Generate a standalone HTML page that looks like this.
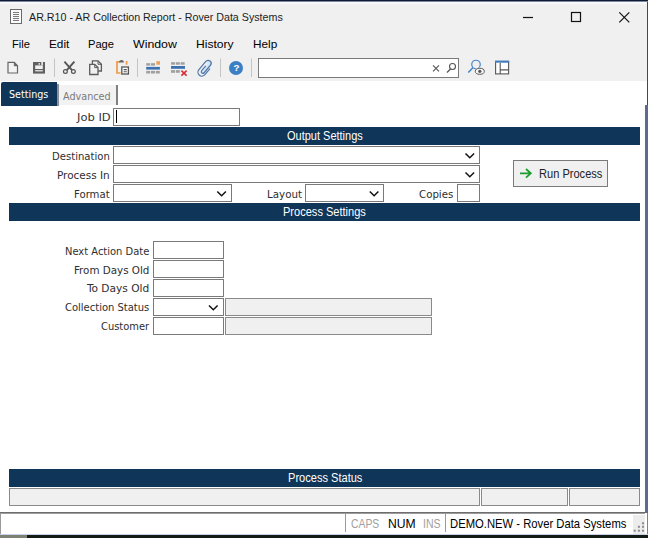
<!DOCTYPE html>
<html><head><meta charset="utf-8"><title>AR.R10 - AR Collection Report - Rover Data Systems</title>
<style>
html,body{margin:0;padding:0}
body{width:648px;height:538px;position:relative;overflow:hidden;background:#fff;font-family:"Liberation Sans",sans-serif}
.a{position:absolute}
.t{position:absolute;white-space:nowrap;transform-origin:0 0;display:inline-block}
.in{position:absolute;box-sizing:border-box;border:1px solid #7a7a7a;background:#fff}
.ro{position:absolute;box-sizing:border-box;border:1px solid #8a8a8a;background:#f0f0f0}
.bar{position:absolute;left:9px;width:631px;background:#0f3558}
.sep{position:absolute;width:1px;background:#c8c8c8}
svg{position:absolute;overflow:visible}

</style></head>
<body>
<!-- window chrome -->
<div class="a" style="left:0;top:0;width:648px;height:81px;background:#f0f0f0"></div>
<div class="a" style="left:0;top:0;width:648px;height:1px;background:#0f1b35"></div>
<div class="a" style="left:0;top:1px;width:648px;height:1px;background:#7d889e"></div>
<div class="a" style="left:0;top:2px;width:647px;height:2px;background:#f6f8fb"></div>
<div class="a" style="left:647px;top:2px;width:1px;height:103px;background:#33497a"></div>
<div class="a" style="left:645px;top:105px;width:3px;height:408px;background:#5f6b8c"></div>
<!-- bottom desktop strip -->
<div class="a" style="left:0;top:534px;width:648px;height:1px;background:#c9d2e6"></div>
<div class="a" style="left:0;top:535px;width:648px;height:3px;background:#121c15"></div>
<div class="a" style="left:0;top:535px;width:27px;height:3px;background:#7d8274"></div>

<!-- title icon -->
<svg style="left:10px;top:9px" width="13" height="16" viewBox="0 0 13 16">
<rect x="0.500" y="0.500" width="11" height="14" fill="#fafafa" stroke="#6a6a6a" />
<path d="M3 3.500h6M3 5.500h6M3 7.500h6M3 9.500h6M3 11.500h6" stroke="#7a7a7a" stroke-width="1"/>
</svg>
<!-- window buttons -->
<svg style="left:0;top:0" width="648" height="32" viewBox="0 0 648 32">
<path d="M523 17.5h10" stroke="#111" stroke-width="1.2"/>
<rect x="571.5" y="12.5" width="9" height="9" fill="none" stroke="#111" stroke-width="1.2"/>
<path d="M619.3 12.3l10 10M629.3 12.3l-10 10" stroke="#111" stroke-width="1.2"/>
</svg>

<!-- toolbar -->
<svg style="left:0;top:54px" width="648" height="28" viewBox="0 54 648 28">
<!-- new -->
<path d="M8 62.300h6.300l3.200 3.400v7.300h-9.500z" fill="#f2f2f2" stroke="#666" stroke-width="1.200"/>
<path d="M14.200 62.300v3.600h3.400z" fill="#666" stroke="#666" stroke-width="0.600"/>
<!-- save -->
<rect x="33" y="62" width="12" height="11.600" fill="#606060"/>
<rect x="35.200" y="65.400" width="7.600" height="3.600" fill="#f0f0f0"/>
<rect x="41.300" y="62" width="1.600" height="3.400" fill="#f0f0f0"/>
<rect x="38.500" y="63" width="1.500" height="1.800" fill="#d4d4d4"/>
<rect x="35.200" y="70.100" width="7.600" height="1.300" fill="#e6e6e6"/>
<!-- sep -->
<path d="M54.500 58.500v18.500M137.500 58.500v18.500M220.500 58.500v18.500M251.500 58.500v18.500" stroke="#c4c4c4" stroke-width="1"/>
<!-- scissors -->
<path d="M64.400 61.600l7.600 8.600M74.400 61.600l-7.600 8.600" stroke="#555" stroke-width="1.900" fill="none"/>
<circle cx="65.400" cy="71.500" r="1.900" fill="none" stroke="#555" stroke-width="1.200"/>
<circle cx="73.400" cy="71.500" r="1.900" fill="none" stroke="#555" stroke-width="1.200"/>
<!-- copy -->
<path d="M92.400 60.900h5.600l3.400 3.400v6.700h-9z" fill="#f0f0f0" stroke="#5c5c5c" stroke-width="1.300"/>
<path d="M98 60.900v3.400h3.400" fill="none" stroke="#5c5c5c" stroke-width="1"/>
<path d="M89.700 64.300h5l3.300 3.300v6.900h-8.300z" fill="#f0f0f0" stroke="#5c5c5c" stroke-width="1.300"/>
<path d="M94.700 64.300v3.300h3.300" fill="none" stroke="#5c5c5c" stroke-width="1"/>
<!-- paste -->
<path d="M120 61.800H117V73H120.600" fill="none" stroke="#ee9a45" stroke-width="1.700"/>
<path d="M126.600 61V64.700" fill="none" stroke="#ee9a45" stroke-width="1.700"/>
<path d="M119.200 62.600v-0.800a2.300 1.700 0 0 1 4.600 0v0.800z" fill="#666"/>
<rect x="121.800" y="67" width="6.600" height="7" fill="#fff" stroke="#555" stroke-width="1.300"/>
<path d="M123.600 69.600h3.200M123.600 71.800h3.200" stroke="#555" stroke-width="1.100"/>
<!-- insert row -->
<g fill="#a0a0a0">
<rect x="146.200" y="63.200" width="4" height="2.400"/><rect x="151" y="63.200" width="4" height="2.400"/>
<rect x="146.200" y="70.900" width="4" height="2.600"/><rect x="151" y="70.900" width="4" height="2.600"/><rect x="155.800" y="70.900" width="4" height="2.600"/>
</g>
<rect x="156.400" y="61.200" width="3.600" height="3.500" fill="#f0a050"/>
<rect x="146.200" y="66.900" width="13.700" height="2.700" fill="#3c72b0"/>
<!-- delete row -->
<g fill="#a0a0a0">
<rect x="171" y="62.200" width="4" height="2.500"/><rect x="175.800" y="62.200" width="4" height="2.500"/><rect x="180.600" y="62.200" width="4" height="2.500"/>
<rect x="171" y="70.100" width="4" height="2.700"/><rect x="175.800" y="70.100" width="4" height="2.700"/>
</g>
<rect x="171" y="66" width="14" height="2.800" fill="#3c72b0"/>
<path d="M181.400 70.600l5.200 5M186.600 70.600l-5.200 5" stroke="#d8303a" stroke-width="1.600"/>
<!-- paperclip -->
<g transform="translate(205 68) rotate(-50)">
<path d="M5.600 -3.600A3 3 0 0 1 5.600 2.400L-4.200 2.400A1.600 1.600 0 0 1 -4.200 -0.800L5.600 -0.800z" fill="#d4e8fb" stroke="none"/>
<path d="M2.800 4.200L-5.200 4.200A3.900 3.900 0 0 1 -5.200 -3.600L5.600 -3.600A3 3 0 0 1 5.600 2.400L-4.200 2.400A1.600 1.600 0 0 1 -4.200 -0.800L2.200 -0.800" fill="none" stroke="#5279aa" stroke-width="1.250"/>
</g>
<!-- help -->
<circle cx="236" cy="68" r="7" fill="#3b7fc4"/>
<!-- search box -->
<rect x="258.500" y="58.500" width="200" height="19" fill="#fff" stroke="#7a7a7a"/>
<path d="M433 65.300l6 6M439 65.300l-6 6" stroke="#555" stroke-width="1.100"/>
<circle cx="452.500" cy="66.500" r="3" fill="none" stroke="#555" stroke-width="1.100"/>
<path d="M450.500 69l-3.500 3.500" stroke="#555" stroke-width="1.300"/>
<!-- person search -->
<circle cx="476" cy="64.500" r="4.250" fill="none" stroke="#4384cb" stroke-width="1.200"/>
<path d="M472.800 67.800l-4.500 4.700" stroke="#4384cb" stroke-width="1.500"/>
<ellipse cx="479.800" cy="71.300" rx="5.400" ry="3.900" fill="#f0f0f0"/>
<ellipse cx="479.800" cy="71.300" rx="4.500" ry="3" fill="#f6f6f6" stroke="#5a5a5a" stroke-width="1"/>
<circle cx="479.800" cy="71.300" r="1.600" fill="#555"/>
<!-- layout -->
<rect x="495.600" y="61.500" width="13" height="12.400" fill="#fff" stroke="#555" stroke-width="1.100"/>
<rect x="495" y="60.600" width="14.200" height="2.100" fill="#3f7cc0"/>
<path d="M500.200 63v11M500.200 69.900h8.400" stroke="#555" stroke-width="1.100"/>
</svg>
<span class="t" style="left:233.400px;top:63px;font:bold 9.800px/1 'Liberation Sans',sans-serif;color:#fff">?</span>

<!-- tabs -->
<div class="a" style="left:1px;top:82px;width:56px;height:23.600px;background:#0f3558;border-radius:2px 0 0 0"></div>
<div class="a" style="left:57px;top:83.500px;width:1.600px;height:22.100px;background:#8a9099"></div>
<div class="a" style="left:58.600px;top:85.200px;width:57.600px;height:19.400px;background:#f2f2f2"></div>
<div class="a" style="left:116.200px;top:85.200px;width:1.600px;height:19.400px;background:#808080"></div>

<!-- Job ID -->
<div class="in" style="left:113px;top:108px;width:127px;height:18px"></div>
<div class="a" style="left:116px;top:110px;width:1px;height:12.500px;background:#000"></div>

<!-- output settings -->
<div class="bar" style="top:127px;height:17.500px"></div>
<div class="in" style="left:113px;top:146px;width:367px;height:18px"></div>
<div class="in" style="left:113px;top:165px;width:367px;height:18px"></div>
<div class="in" style="left:113px;top:184px;width:119px;height:18px"></div>
<div class="in" style="left:305px;top:184px;width:79px;height:18px"></div>
<div class="in" style="left:457px;top:184px;width:23px;height:18px"></div>
<svg style="left:0;top:140px;z-index:3" width="648" height="200" viewBox="0 140 648 200">
<g fill="none" stroke="#111" stroke-width="1.500">
<path d="M465.500 153.500l4.300 4.300l4.300-4.300"/>
<path d="M465.500 172.500l4.300 4.300l4.300-4.300"/>
<path d="M217.300 191.500l4.300 4.300l4.300-4.300"/>
<path d="M369.800 191.500l4.300 4.300l4.300-4.300"/>
<path d="M209 305.500l4.300 4.300l4.300-4.300"/>
</g>
<!-- run arrow -->
<path d="M520 173.300h10M526 169l4.800 4.300l-4.800 4.300" fill="none" stroke="#1e9e2e" stroke-width="1.800"/>
</svg>
<div class="a" style="left:513px;top:160px;width:95px;height:27px;box-sizing:border-box;border:1px solid #7a7a7a;background:#f0f0f0"></div>

<!-- process settings -->
<div class="bar" style="top:203px;height:17.500px"></div>
<div class="in" style="left:153px;top:241px;width:71px;height:18px"></div>
<div class="in" style="left:153px;top:260px;width:71px;height:18px"></div>
<div class="in" style="left:153px;top:279px;width:71px;height:18px"></div>
<div class="in" style="left:153px;top:298px;width:71px;height:18px"></div>
<div class="in" style="left:153px;top:317px;width:71px;height:18px"></div>
<div class="ro" style="left:225px;top:298px;width:207px;height:18px"></div>
<div class="ro" style="left:225px;top:317px;width:207px;height:18px"></div>

<!-- process status -->
<div class="bar" style="top:469px;height:18px"></div>
<div class="ro" style="left:9px;top:488px;width:471px;height:18px"></div>
<div class="ro" style="left:481px;top:488px;width:87px;height:18px"></div>
<div class="ro" style="left:569px;top:488px;width:71px;height:18px"></div>

<!-- status bar -->
<div class="a" style="left:0;top:512px;width:645px;height:1px;background:#6e6e6e"></div>
<div class="a" style="left:0;top:513px;width:645px;height:1px;background:#9c9c9c"></div>
<div class="a" style="left:0;top:513px;width:1px;height:21px;background:#9a9a9a"></div>
<div class="a" style="left:647px;top:513px;width:1px;height:21px;background:#6f83ad"></div>
<div class="a" style="left:345px;top:514px;width:1px;height:18px;background:#9a9a9a"></div>
<div class="a" style="left:445px;top:514px;width:1px;height:18px;background:#9a9a9a"></div>
<div class="a" style="left:633px;top:515px;width:12px;height:19px;background:#ececec"></div>
<svg style="left:633px;top:515px" width="14" height="19" viewBox="0 0 14 19">
<g fill="#8a8a92"><rect x="9" y="7.300" width="2" height="2"/><rect x="4.900" y="10.800" width="2" height="2"/><rect x="9" y="10.800" width="2" height="2"/><rect x="0.700" y="14.700" width="2" height="2"/><rect x="4.900" y="14.700" width="2" height="2"/><rect x="9" y="14.700" width="2" height="2"/></g>
</svg>

<span class="t" style="left:28.5px;top:11.9px;font:normal 10.6px/1 'Liberation Sans', sans-serif;color:#1c1c1c;transform:scaleX(1.0095)">AR.R10 - AR Collection Report - Rover Data Systems</span>
<span class="t" style="left:12.2px;top:37.8px;font:normal 11.6px/1 'Liberation Sans', sans-serif;color:#000;transform:scaleX(0.9632)">File</span>
<span class="t" style="left:48.8px;top:37.8px;font:normal 11.6px/1 'Liberation Sans', sans-serif;color:#000;transform:scaleX(1.0158)">Edit</span>
<span class="t" style="left:88.2px;top:37.8px;font:normal 11.6px/1 'Liberation Sans', sans-serif;color:#000;transform:scaleX(0.9602)">Page</span>
<span class="t" style="left:132.5px;top:37.8px;font:normal 11.6px/1 'Liberation Sans', sans-serif;color:#000;transform:scaleX(1.0642)">Window</span>
<span class="t" style="left:196.2px;top:37.8px;font:normal 11.6px/1 'Liberation Sans', sans-serif;color:#000;transform:scaleX(1.0422)">History</span>
<span class="t" style="left:252.9px;top:37.8px;font:normal 11.6px/1 'Liberation Sans', sans-serif;color:#000;transform:scaleX(1.0143)">Help</span>
<span class="t" style="left:9.2px;top:88.5px;font:normal 11px/1 'DejaVu Sans Condensed', 'DejaVu Sans', sans-serif;color:#fff;transform:scaleX(0.9678)">Settings</span>
<span class="t" style="left:62.7px;top:91.2px;font:normal 11px/1 'DejaVu Sans Condensed', 'DejaVu Sans', sans-serif;color:#7a7a7a;transform:scaleX(0.9760)">Advanced</span>
<span class="t" style="left:76.7px;top:112.0px;font:normal 11px/1 'DejaVu Sans Condensed', 'DejaVu Sans', sans-serif;color:#333;transform:scaleX(1.1646)">Job ID</span>
<span class="t" style="left:286.6px;top:129.6px;font:normal 12.3px/1 'Liberation Sans', sans-serif;color:#fff;transform:scaleX(0.8942)">Output Settings</span>
<span class="t" style="left:51.9px;top:150.7px;font:normal 11px/1 'DejaVu Sans Condensed', 'DejaVu Sans', sans-serif;color:#2e2e2e;transform:scaleX(1.0177)">Destination</span>
<span class="t" style="left:57.0px;top:169.5px;font:normal 11px/1 'DejaVu Sans Condensed', 'DejaVu Sans', sans-serif;color:#2e2e2e;transform:scaleX(1.0576)">Process In</span>
<span class="t" style="left:74.0px;top:188.5px;font:normal 11px/1 'DejaVu Sans Condensed', 'DejaVu Sans', sans-serif;color:#2e2e2e;transform:scaleX(1.0255)">Format</span>
<span class="t" style="left:267.1px;top:188.5px;font:normal 11px/1 'DejaVu Sans Condensed', 'DejaVu Sans', sans-serif;color:#2e2e2e;transform:scaleX(1.0404)">Layout</span>
<span class="t" style="left:419.1px;top:188.5px;font:normal 11px/1 'DejaVu Sans Condensed', 'DejaVu Sans', sans-serif;color:#2e2e2e;transform:scaleX(1.0316)">Copies</span>
<span class="t" style="left:539.0px;top:167.5px;font:normal 12.2px/1 'Liberation Sans', sans-serif;color:#222;transform:scaleX(0.9086)">Run Process</span>
<span class="t" style="left:283.2px;top:205.6px;font:normal 12.3px/1 'Liberation Sans', sans-serif;color:#fff;transform:scaleX(0.8983)">Process Settings</span>
<span class="t" style="left:65.1px;top:245.7px;font:normal 11px/1 'DejaVu Sans Condensed', 'DejaVu Sans', sans-serif;color:#2e2e2e;transform:scaleX(1.0041)">Next Action Date</span>
<span class="t" style="left:74.0px;top:264.5px;font:normal 11px/1 'DejaVu Sans Condensed', 'DejaVu Sans', sans-serif;color:#2e2e2e;transform:scaleX(1.0441)">From Days Old</span>
<span class="t" style="left:87.2px;top:283.2px;font:normal 11px/1 'DejaVu Sans Condensed', 'DejaVu Sans', sans-serif;color:#2e2e2e;transform:scaleX(1.0718)">To Days Old</span>
<span class="t" style="left:65.1px;top:302.4px;font:normal 11px/1 'DejaVu Sans Condensed', 'DejaVu Sans', sans-serif;color:#2e2e2e;transform:scaleX(1.0079)">Collection Status</span>
<span class="t" style="left:101.3px;top:321.2px;font:normal 11px/1 'DejaVu Sans Condensed', 'DejaVu Sans', sans-serif;color:#2e2e2e;transform:scaleX(1.0005)">Customer</span>
<span class="t" style="left:288.0px;top:471.6px;font:normal 12.3px/1 'Liberation Sans', sans-serif;color:#fff;transform:scaleX(0.8996)">Process Status</span>
<span class="t" style="left:350.5px;top:518.4px;font:normal 12.4px/1 'Liberation Sans', sans-serif;color:#a0a0a0;transform:scaleX(0.8385)">CAPS</span>
<span class="t" style="left:388.1px;top:518.4px;font:normal 12.4px/1 'Liberation Sans', sans-serif;color:#000;transform:scaleX(0.9781)">NUM</span>
<span class="t" style="left:423.2px;top:518.4px;font:normal 12.4px/1 'Liberation Sans', sans-serif;color:#a0a0a0;transform:scaleX(0.8520)">INS</span>
<span class="t" style="left:450.2px;top:518.4px;font:normal 12.4px/1 'Liberation Sans', sans-serif;color:#000;transform:scaleX(0.9085)">DEMO.NEW - Rover Data Systems</span>

</body></html>
